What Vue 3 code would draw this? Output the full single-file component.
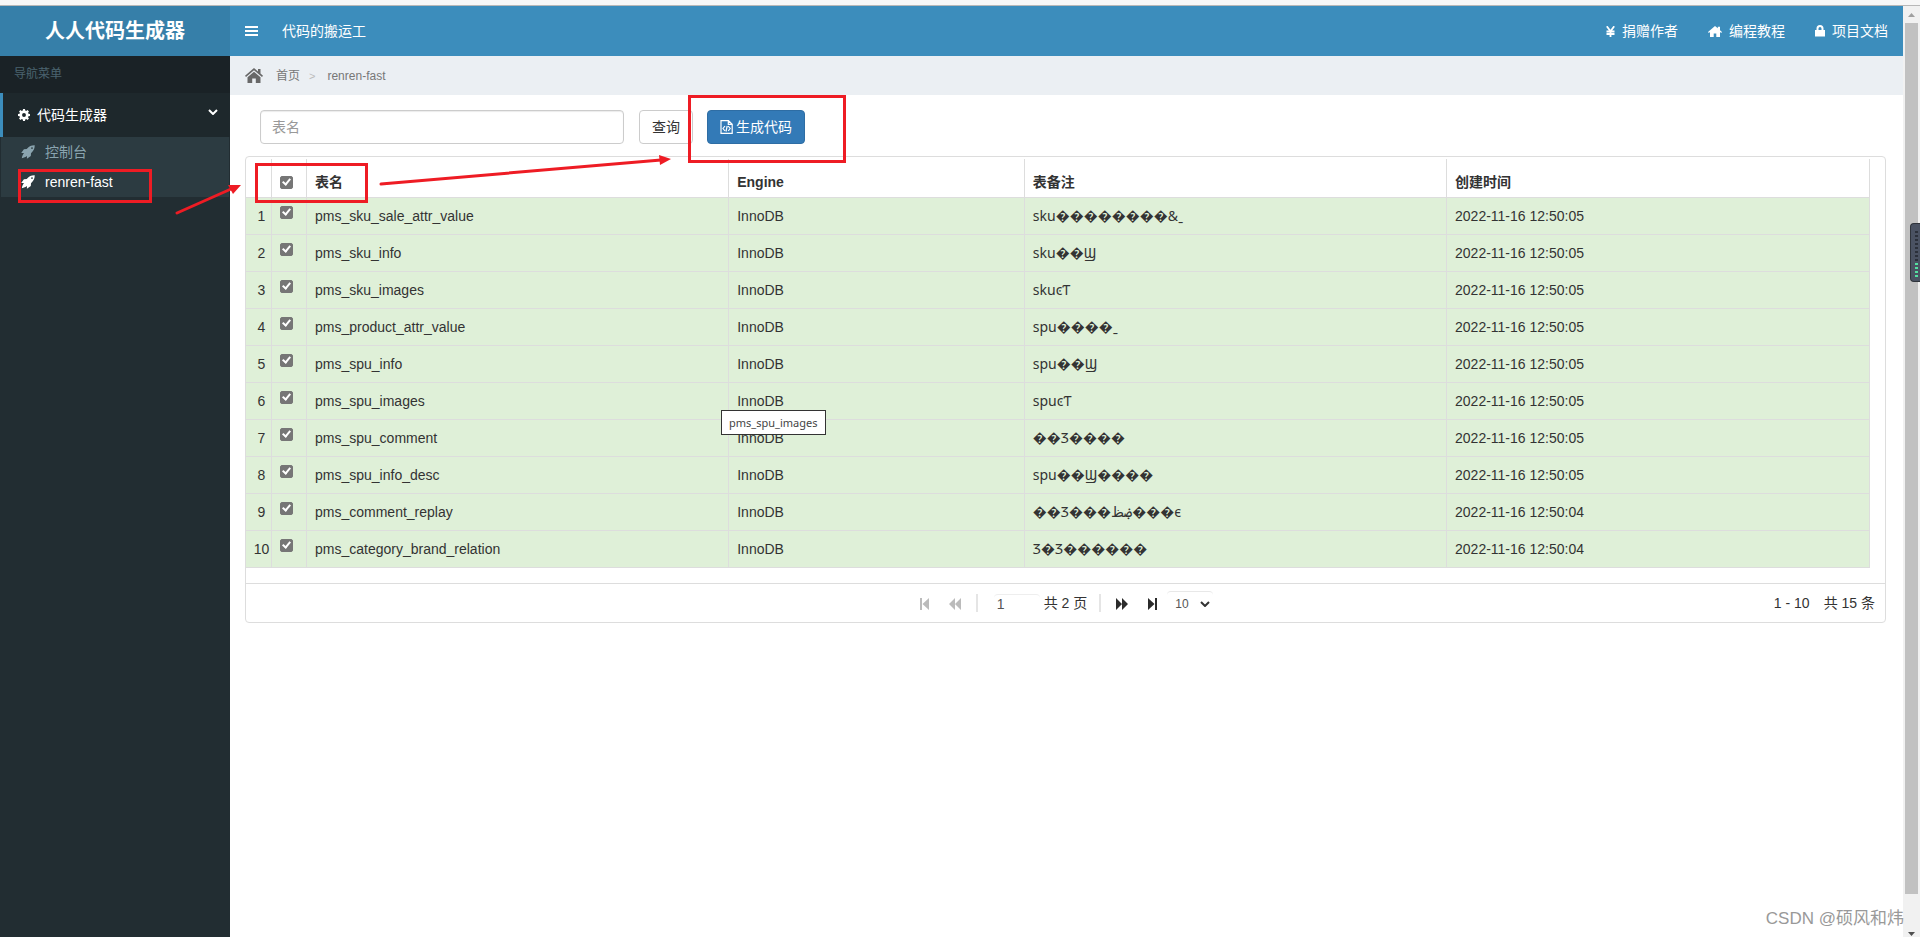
<script setup>
import { ref } from 'vue'

const F = '\uFFFD'
const rows = ref([
  ['pms_sku_sale_attr_value', 'sku' + F.repeat(8) + '&ˍ', '05'],
  ['pms_sku_info', 'sku' + F.repeat(2) + 'Ϣ', '05'],
  ['pms_sku_images', 'skuͼƬ', '05'],
  ['pms_product_attr_value', 'spu' + F.repeat(4) + 'ˍ', '05'],
  ['pms_spu_info', 'spu' + F.repeat(2) + 'Ϣ', '05'],
  ['pms_spu_images', 'spuͼƬ', '05'],
  ['pms_spu_comment', F.repeat(2) + 'Ʒ' + F.repeat(4), '05'],
  ['pms_spu_info_desc', 'spu' + F.repeat(2) + 'Ϣ' + F.repeat(4), '05'],
  ['pms_comment_replay', F.repeat(2) + 'Ʒ' + F.repeat(3) + 'ۻظ' + F.repeat(3) + 'ϵ', '04'],
  ['pms_category_brand_relation', 'Ʒ' + F + 'Ʒ' + F.repeat(6), '04'],
].map(([name, note, sec]) => ({ name, note, time: '2022-11-16 12:50:' + sec, checked: true })))
const all = ref(true)
const toggleAll = () => rows.value.forEach((r) => { r.checked = all.value })
const page = ref('1')
const size = ref('10')
</script>

<template>
  <div class="page">
    <div class="strip"></div>
    <div class="app">
      <aside class="sidebar">
        <div class="logo">人人代码生成器</div>
        <nav>
          <div class="nav-title">导航菜单</div>
          <a href="#" class="parent">
            <svg width="12" height="12" viewBox="0 0 16 16"><path fill="#fff" fill-rule="evenodd" d="M6.700 0h2.600l.4 2.100 1.200.5 1.800-1.200 1.900 1.900-1.200 1.800.5 1.200 2.100.4v2.600l-2.100.4-.5 1.200 1.200 1.800-1.900 1.900-1.800-1.200-1.200.5-.4 2.100H6.700l-.4-2.100-1.200-.5-1.800 1.200-1.900-1.900 1.200-1.800-.5-1.200L0 9.300V6.700l2.100-.4.5-1.200-1.200-1.800 1.900-1.900 1.800 1.200 1.200-.5zM8 5.400a2.600 2.600 0 1 0 0 5.200 2.600 2.600 0 0 0 0-5.200z"/></svg>
            <span>代码生成器</span>
            <svg class="chev" width="10" height="6" viewBox="0 0 10 6"><path d="M1 1l4 4 4-4" fill="none" stroke="#fff" stroke-width="2"/></svg>
          </a>
          <div class="sub">
            <a v-for="(t, i) in ['控制台', 'renren-fast']" :key="t" href="#" :class="{ on: i === 1 }">
              <svg width="14" height="14" viewBox="0 0 14 14"><path fill="currentColor" fill-rule="evenodd" d="M13.700.3C10.500.2 8.200 1.200 5.700 4L2.900 4.200.2 8.100l2.800-.1C2 9.200 1.200 10.800.8 13.200c2.200-.3 3.900-1 5.200-2.100l-.1 2.700 3.900-2.700.2-2.900C12.800 5.800 13.800 3.500 13.700.3zM11 2.200a.9.9 0 1 1 0 1.800.9.9 0 0 1 0-1.800z"/></svg>
              <span>{{ t }}</span>
            </a>
          </div>
        </nav>
      </aside>

      <main>
        <header>
          <button class="burger" aria-label="菜单">
            <svg width="13" height="11" viewBox="0 0 13 11"><path fill="#fff" d="M0 0h13v2H0zM0 4h13v2H0zM0 8h13v2H0z"/></svg>
          </button>
          <span class="slogan">代码的搬运工</span>
          <div class="links">
            <a href="#">
              <svg width="9" height="11" viewBox="0 0 9 11"><path d="M.8.3l3.700 5 3.700-5M4.500 5v6M.5 5.500h8M.5 8h8" fill="none" stroke="#fff" stroke-width="1.800"/></svg>捐赠作者</a>
            <a href="#">
              <svg width="14" height="11" viewBox="0 0 14 11"><path fill="#fff" d="M7 0l2.800 2.300V.8H12v3.400l2 1.700-.8 1L12 6v5H8.300V7.500H5.700V11H2V6l-1.200.9-.8-1z"/></svg>编程教程</a>
            <a href="#">
              <svg width="10" height="12" viewBox="0 0 10 12"><path fill="#fff" fill-rule="evenodd" d="M1.500 5V3.500a3.500 3.500 0 0 1 7 0V5H10v6.500H0V5zm2 0h3V3.500a1.500 1.500 0 0 0-3 0z"/></svg>项目文档</a>
          </div>
        </header>

        <div class="crumbs">
          <svg width="18" height="15" viewBox="0 0 18 15"><path fill="#686868" d="M9 0l4 3.400V1h2.500v4.600L18 7.800l-1 1.200L9 2.300 1 9 0 7.800zM9 3.800l6.500 5.500V15h-4.700v-4.500H7.200V15H2.500V9.300z"/></svg>
          <a href="#">首页</a><span class="sep">&gt;</span><span>renren-fast</span>
        </div>

        <section class="content">
          <div class="tools">
            <input type="text" placeholder="表名" aria-label="表名" />
            <button class="btn query">查询</button>
            <button class="btn primary">
              <svg width="13" height="14" viewBox="0 0 13 14"><path d="M1 .7h7.500L12.200 4.200v9.100H1zM8.300.7v3.700h3.900M5 6L3 8.500 5 11M8.200 6l2 2.500-2 2.500M7.200 6l-1.200 5.500" fill="none" stroke="#fff" stroke-width="1.200"/></svg>生成代码</button>
          </div>

          <div class="panel">
            <table>
              <colgroup><col class="c-num" /><col class="c-chk" /><col class="c-name" /><col class="c-eng" /><col class="c-note" /><col class="c-time" /></colgroup>
              <thead>
                <tr>
                  <th></th>
                  <th class="chk"><input v-model="all" type="checkbox" aria-label="全选" @change="toggleAll" /></th>
                  <th>表名</th><th>Engine</th><th>表备注</th><th>创建时间</th>
                </tr>
              </thead>
              <tbody>
                <tr v-for="(r, i) in rows" :key="r.name" :class="{ picked: r.checked }">
                  <td class="num">{{ i + 1 }}</td>
                  <td class="chk"><input v-model="r.checked" type="checkbox" :aria-label="r.name" /></td>
                  <td>{{ r.name }}</td><td>InnoDB</td><td class="note">{{ r.note }}</td><td>{{ r.time }}</td>
                </tr>
              </tbody>
            </table>

            <div class="pager">
              <span class="side"></span>
              <div class="ctl">
                <button disabled aria-label="首页"><svg width="9" height="12" viewBox="0 0 9 12"><path fill="currentColor" d="M0 0h2v12H0zM9 0v12L2.500 6z"/></svg></button>
                <button disabled aria-label="上一页"><svg width="12" height="12" viewBox="0 0 12 12"><path fill="currentColor" d="M6 0v12L0 6zM12 0v12L6 6z"/></svg></button>
                <i class="bar"></i>
                <input v-model="page" type="text" aria-label="页码" />
                <span class="total">共 2 页</span>
                <i class="bar"></i>
                <button aria-label="下一页"><svg width="12" height="12" viewBox="0 0 12 12"><path fill="currentColor" d="M0 0l6 6-6 6zM6 0l6 6-6 6z"/></svg></button>
                <button aria-label="末页"><svg width="9" height="12" viewBox="0 0 9 12"><path fill="currentColor" d="M7 0h2v12H7zM0 0l6.500 6L0 12z"/></svg></button>
                <span class="size">
                  <select v-model="size" aria-label="每页条数"><option>10</option><option>30</option><option>50</option></select>
                  <svg width="10" height="6" viewBox="0 0 10 6"><path d="M1 1l4 4 4-4" fill="none" stroke="#333" stroke-width="2"/></svg>
                </span>
              </div>
              <span class="side info"><span>1 - 10</span><span>共 15 条</span></span>
            </div>
          </div>
        </section>
      </main>

      <div class="scroll">
        <svg width="7" height="4" viewBox="0 0 7 4"><path fill="#a0a0a0" d="M0 4l3.500-4L7 4z"/></svg>
        <div class="thumb"></div>
        <svg width="7" height="4" viewBox="0 0 7 4"><path fill="#505050" d="M0 0h7L3.500 4z"/></svg>
      </div>
    </div>

    <div class="tip">pms_spu_images</div>
    <div class="widget"><i v-for="n in 12" :key="n" :class="{ lit: n > 8 }"></i></div>
    <div class="watermark">CSDN @硕风和炜</div>
    <div class="mark m1"></div>
    <div class="mark m2"></div>
    <div class="mark m3"></div>
    <svg class="arrows" width="700" height="230" viewBox="0 0 700 230">
      <g stroke="#ee1c24" stroke-width="3" stroke-linecap="round"><path d="M177 213l54-24M381 184l280-24"/></g>
      <path fill="#ee1c24" d="M241 185l-8 9-5-9zM671 159l-11 6-1-10z"/>
    </svg>
  </div>
</template>

<style>
html, body, #app { height: 100%; margin: 0; }
body { overflow: hidden; }
</style>

<style scoped>
* { box-sizing: border-box; }
.page { position: relative; height: 100%; display: flex; flex-direction: column; background: #fff; color: #333; font: 14px/20px "Liberation Sans", "Noto Sans CJK SC", sans-serif; overflow: hidden; }
a { color: inherit; text-decoration: none; }
svg { flex: none; display: block; }
button { font: inherit; cursor: pointer; }
.strip { flex: none; height: 6px; background: #f7f7f7; border-bottom: 1px solid #b8b8b8; }
.app { flex: 1; min-height: 0; display: flex; }
.sidebar { flex: none; width: 230px; background: #222d32; }
.logo { height: 50px; line-height: 50px; text-align: center; background: #367fa9; color: #fff; font-size: 20px; font-weight: bold; }
.nav-title { height: 37px; padding: 0 14px; line-height: 36px; font-size: 12px; color: #4b646f; background: #1a2226; }
.parent { display: flex; align-items: center; height: 44px; padding: 0 12px 0 15px; border-left: 3px solid #3c8dbc; background: #1e282c; color: #fff; }
.parent span { flex: 1; margin-left: 7px; }
.chev { margin-bottom: 6px; }
.sub { margin: 0 1px; background: #2c3b41; }
.sub a { display: flex; align-items: center; height: 30px; padding-left: 20px; color: #8aa4af; }
.sub a span { margin-left: 10px; }
.sub a.on { color: #fff; }
main { flex: 1; min-width: 0; }
header { display: flex; align-items: center; height: 50px; padding: 0 15px; background: #3c8dbc; color: #fff; }
.burger { padding: 0; border: 0; background: none; }
.slogan { flex: 1; margin-left: 24px; }
.links { display: flex; gap: 30px; }
.links a { display: flex; align-items: center; gap: 7px; }
.crumbs { display: flex; align-items: center; height: 39px; padding: 0 15px; background: #ebeff3; color: #777; font-size: 12px; }
.crumbs a { margin-left: 13px; }
.sep { margin: 0 12px 0 9px; color: #bbb; font-size: 11px; }
.content { padding: 15px 17px 15px 15px; }
.tools { display: flex; padding-left: 15px; }
.tools input { width: 364px; height: 34px; padding: 0 11px; border: 1px solid #ccc; border-radius: 4px; box-shadow: inset 0 1px 1px rgba(0, 0, 0, .08); font: inherit; }
.tools input::placeholder { color: #999; }
.btn { display: flex; align-items: center; height: 34px; padding: 0 12px; border: 1px solid #ccc; border-radius: 4px; background: #fff; color: #333; }
.query { margin-left: 15px; }
.primary { margin-left: 14px; gap: 3px; background: #337ab7; border-color: #2e6da4; color: #fff; }
.panel { margin-top: 12px; padding-top: 2px; border: 1px solid #ddd; border-radius: 4px; }
table { width: calc(100% - 15px); table-layout: fixed; border-collapse: separate; border-spacing: 0; }
.c-num { width: 26px; }
.c-chk { width: 35px; }
.c-name, .c-note { width: 26%; }
.c-eng { width: 18.2%; }
th, td { height: 37px; padding: 0 8px; border-right: 1px solid #ddd; border-bottom: 1px solid #ddd; text-align: left; white-space: nowrap; }
th { height: 39px; padding-top: 8px; }
.picked td { background: #dff0d8; }
td.num { padding: 0 0 0 6px; text-align: center; }
.chk { padding-left: 8px; padding-right: 0; }
td.chk { padding-bottom: 8px; }
.chk input { display: block; appearance: none; width: 13px; height: 13px; margin: 0; border: 1px solid #767676; border-radius: 2px; background: #fff; }
.chk input:checked { background: #767676; position: relative; }
.chk input:checked::after { content: ""; position: absolute; left: 3px; top: 0; width: 3px; height: 6px; border: solid #fff; border-width: 0 2px 2px 0; transform: rotate(40deg); }
.note { font-family: "Noto Sans", "Liberation Sans", "DejaVu Sans", "Noto Sans CJK SC", sans-serif; }
.pager { display: flex; align-items: center; height: 39px; margin-top: 15px; padding: 0 10px 0 0; border-top: 1px solid #ddd; }
.side { flex: 1; }
.info { display: flex; justify-content: flex-end; gap: 14px; }
.ctl { display: flex; align-items: center; padding-left: 2px; }
.ctl button { display: flex; justify-content: center; width: 30px; padding: 2px 0 0; border: 0; background: none; color: #2b2b2b; }
.ctl button:disabled { color: #bbb; }
.bar { width: 2px; height: 18px; margin: 0 6px; background: #e5e5e5; }
.ctl input { width: 46px; height: 18px; margin: 0 4px 0 10px; padding: 0 3px; border: 0; border-top: 1px solid #eee; border-radius: 4px; background: #fff; font: inherit; color: #555; }
.total { margin-right: 6px; }
.size { display: flex; align-items: center; width: 46px; height: 24px; border-top: 1px solid #e8e8e8; border-radius: 4px; }
.size select { appearance: none; width: 33px; padding: 0 0 0 8px; border: 0; background: none; font: 12px/18px "Liberation Sans", sans-serif; color: #555; }
.scroll { flex: none; display: flex; flex-direction: column; align-items: center; width: 17px; padding: 7px 0 1px; background: #f1f1f1; }
.thumb { flex: 1; width: 13px; margin: 6px 0 38px; background: #c1c1c1; }
.tip { position: absolute; left: 721px; top: 410px; padding: 0 8px 0 7px; border: 1px solid #333; background: #fff; font: 11px/23px "Noto Sans", sans-serif; color: #444; }
.widget { position: absolute; right: 0; top: 223px; display: flex; flex-direction: column; gap: 2px; width: 10px; height: 59px; padding: 7px 2px 0 4px; border: 1px solid #2f343b; border-right: 0; border-radius: 4px 0 0 4px; background: #4a5262; }
.widget i { height: 2px; background: #2b303a; }
.widget i.lit { background: #54e0a0; }
.watermark { position: absolute; right: 16px; bottom: 7px; font-size: 17px; line-height: 22px; color: #999; }
.mark { position: absolute; border: 3px solid #ee1c24; }
.m1 { left: 18px; top: 169px; width: 134px; height: 34px; }
.m2 { left: 255px; top: 163px; width: 113px; height: 40px; }
.m3 { left: 688px; top: 95px; width: 158px; height: 68px; }
.arrows { position: absolute; left: 0; top: 0; pointer-events: none; }
</style>
